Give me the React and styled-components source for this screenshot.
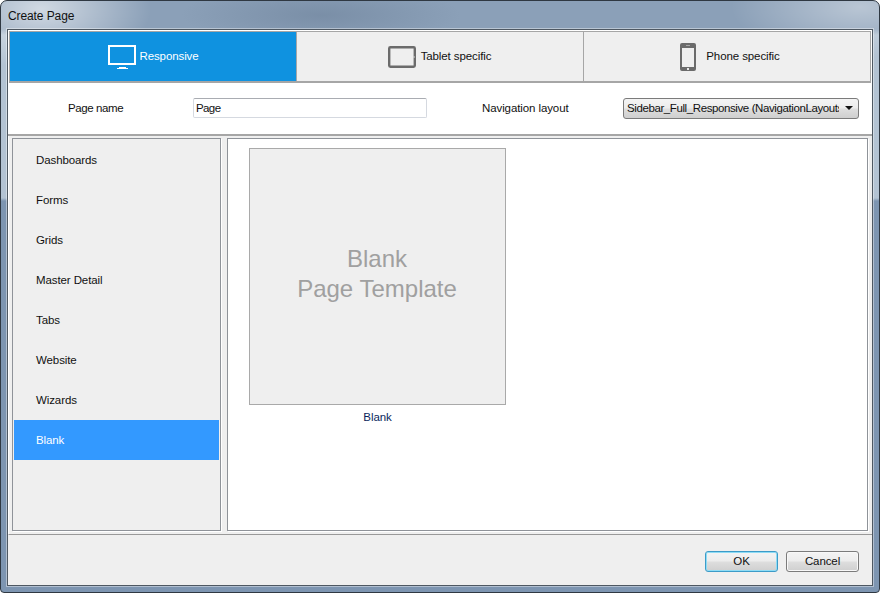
import React from 'react'
import styled, { createGlobalStyle } from 'styled-components'

const Global = createGlobalStyle`
    html, body {
        margin: 0;
        padding: 0;
        background: #fff;
    }
    body {
        font-family: "Liberation Sans", Arial, sans-serif;
        font-size: 11.5px;
        letter-spacing: -.1px;
        color: #111;
    }
`

const Frame = styled.div`
    box-sizing: border-box;
    width: 880px;
    height: 593px;
    display: flex;
    flex-direction: column;
    padding: 0 6px 6px;
    border: 1px solid #2f3842;
    border-radius: 7px 7px 4px 4px;
    background:
        radial-gradient(ellipse 110px 60px at 40px 8px, rgba(255, 255, 255, .6), rgba(255, 255, 255, 0)),
        radial-gradient(ellipse 130px 50px at 860px 6px, rgba(255, 255, 255, .4), rgba(255, 255, 255, 0)),
        radial-gradient(ellipse 140px 30px at 320px 14px, rgba(90, 110, 135, .35), rgba(90, 110, 135, 0)),
        linear-gradient(180deg, #8ba0b8 0, #8ba0b8 28px, #b3c3d3 34px, #b3c3d3 197px, #7d95b1 200px, #7d95b1 100%);
`

const TitleBar = styled.div`
    height: 28px;
    flex: none;
    display: flex;
    align-items: center;
    padding: 1px 0 0 1px;
    box-sizing: border-box;
    color: #111;
    font-size: 12px;
    letter-spacing: -.1px;
`

const Panel = styled.div`
    flex: 1;
    min-height: 0;
    display: flex;
    flex-direction: column;
    background: #fff;
    border: 1px solid #4e5862;
    box-shadow: 0 0 0 1px rgba(255, 255, 255, .4);
`

const TabsWrap = styled.div`
    flex: none;
    padding: 1px 1px 0;
`

const Tabs = styled.div`
    height: 52px;
    box-sizing: border-box;
    display: grid;
    grid-template-columns: 287px 287px 1fr;
    border: 1px solid #a6a6a6;
    border-bottom-width: 2px;
`

const Tab = styled.div`
    display: flex;
    align-items: center;
    justify-content: center;
    gap: 4px;
    box-sizing: border-box;
    background: ${p => (p.$active ? '#0f92e0' : '#efefef')};
    color: ${p => (p.$active ? '#fff' : '#111')};
    border-right: 1px solid #a6a6a6;
    &:last-child {
        border-right: none;
    }
`

const TabLabel = styled.span`
    margin-bottom: 2px;
`

const TabIcon = styled.svg`
    width: 28px;
    height: 28px;
    flex: none;
    display: block;
    overflow: visible;
`

const FormRow = styled.div`
    flex: none;
    height: 53px;
    box-sizing: border-box;
    display: flex;
    align-items: center;
    border-bottom: 2px solid #a6a6a6;
    padding-bottom: 1px;
`

const FieldLabel = styled.label`
    width: ${p => p.$width}px;
    margin-left: ${p => p.$left}px;
    letter-spacing: ${p => p.$spacing || '-.1px'};
    flex: none;
`

const TextInput = styled.div`
    box-sizing: border-box;
    width: 234px;
    height: 20px;
    flex: none;
    display: flex;
    align-items: center;
    padding-left: 2px;
    letter-spacing: -.6px;
    border: 1px solid #d5d9e0;
    border-top-color: #a9acb2;
    border-radius: 2px;
    background: #fff;
`

const Select = styled.div`
    box-sizing: border-box;
    width: 236px;
    height: 21px;
    flex: none;
    display: flex;
    align-items: center;
    padding: 0 5px 0 3px;
    border: 1px solid #7b7b7b;
    border-radius: 3px;
    background: linear-gradient(180deg, #f4f4f4 0, #ececec 48%, #dedede 52%, #cfcfcf 100%);
`

const SelectText = styled.span`
    flex: 1;
    overflow: hidden;
    white-space: nowrap;
    letter-spacing: -.4px;
`

const Caret = styled.span`
    flex: none;
    width: 0;
    height: 0;
    margin-left: 6px;
    border-left: 4px solid transparent;
    border-right: 4px solid transparent;
    border-top: 4px solid #111;
`

const Body = styled.div`
    flex: 1;
    min-height: 0;
    display: flex;
    gap: 6px;
    padding: 2px 4px 3px 3px;
    background: #efefef;
    border-left: 1px solid #fff;
    border-bottom: 1px solid #999;
`

const Sidebar = styled.div`
    width: 209px;
    flex: none;
    box-sizing: border-box;
    padding: 1px;
    border: 1px solid #8f9399;
    background: #efefef;
    box-shadow: 1px 1px 0 #fff;
`

const SideItem = styled.div`
    height: 40px;
    display: flex;
    align-items: center;
    padding-left: 22px;
    background: ${p => (p.$active ? '#3399ff' : 'transparent')};
    color: ${p => (p.$active ? '#fff' : '#111')};
`

const Gallery = styled.div`
    flex: 1;
    box-sizing: border-box;
    padding: 9px 21px;
    background: #fff;
    border: 1px solid #8f9399;
    box-shadow: 1px 1px 0 #fff;
`

const Template = styled.div`
    width: 257px;
    display: flex;
    flex-direction: column;
    align-items: center;
`

const Thumb = styled.div`
    box-sizing: border-box;
    width: 257px;
    height: 257px;
    display: flex;
    flex-direction: column;
    align-items: center;
    justify-content: center;
    border: 1px solid #a9a9a9;
    background: #efefef;
    color: #a0a0a0;
    font-size: 24px;
    letter-spacing: 0;
    line-height: 30px;
    padding: 0 1px 6px 0;
`

const Caption = styled.div`
    margin-top: 6px;
    color: #0a1f5c;
`

const Footer = styled.div`
    flex: none;
    height: 50px;
    box-sizing: border-box;
    display: flex;
    justify-content: flex-end;
    gap: 8px;
    padding: 16px 13px 0 0;
    background: #efefef;
`

const Button = styled.div`
    box-sizing: border-box;
    width: 73px;
    height: 21px;
    display: flex;
    align-items: center;
    justify-content: center;
    padding-bottom: 1px;
    border: 1px solid ${p => (p.$primary ? '#3c9bc8' : '#7b7b7b')};
    border-radius: 3px;
    box-shadow: ${p => (p.$primary ? 'inset 0 0 0 1px #8fdcf5' : 'inset 0 0 0 1px #f8f8f8')};
    background: linear-gradient(180deg, #f4f4f4 0, #ececec 48%, #dedede 52%, #cfcfcf 100%);
`

const MonitorIcon = () => (
    <TabIcon viewBox="0 0 28 28">
        <path fill="#fff" fillRule="evenodd" d="M1 2h28v20H1zM3 4v16h24V4z" />
        <path fill="#fff" d="M12 24h7v1h-7zM10 25h11v1H10z" />
    </TabIcon>
)

const TabletIcon = () => (
    <TabIcon viewBox="0 0 28 28">
        <rect x="0.200" y="4.200" width="25.600" height="19.600" rx="1.200" fill="none" stroke="#6b6b6b" strokeWidth="2.400" />
        <rect x="24.500" y="13" width="1" height="2" fill="#d0d0d0" />
    </TabIcon>
)

const PhoneIcon = () => (
    <TabIcon viewBox="0 0 28 28">
        <path fill="#6b6b6b" fillRule="evenodd" d="M8 0h12q2 0 2 2v24q0 2-2 2H8q-2 0-2-2V2q0-2 2-2zM8 5v19h12V5z" />
        <rect x="12" y="2" width="4" height="1" fill="#a8a8a8" />
        <rect x="13" y="25" width="2" height="2" fill="#e8e8e8" />
    </TabIcon>
)

const categories = ['Dashboards', 'Forms', 'Grids', 'Master Detail', 'Tabs', 'Website', 'Wizards', 'Blank']

const App = () => {
    return (
        <Frame>
            <Global />
            <TitleBar>Create Page</TitleBar>
            <Panel>
                <TabsWrap>
                    <Tabs>
                        <Tab $active><MonitorIcon /><TabLabel>Responsive</TabLabel></Tab>
                        <Tab><TabletIcon /><TabLabel>Tablet specific</TabLabel></Tab>
                        <Tab><PhoneIcon /><TabLabel>Phone specific</TabLabel></Tab>
                    </Tabs>
                </TabsWrap>
                <FormRow>
                    <FieldLabel $left={60} $width={125} $spacing="-.4px">Page name</FieldLabel>
                    <TextInput>Page</TextInput>
                    <FieldLabel $left={55} $width={141}>Navigation layout</FieldLabel>
                    <Select>
                        <SelectText>Sidebar_Full_Responsive (NavigationLayouts</SelectText>
                        <Caret />
                    </Select>
                </FormRow>
                <Body>
                    <Sidebar>
                        {categories.map(name => (
                            <SideItem key={name} $active={name === 'Blank'}>{name}</SideItem>
                        ))}
                    </Sidebar>
                    <Gallery>
                        <Template>
                            <Thumb>
                                <div>Blank</div>
                                <div>Page Template</div>
                            </Thumb>
                            <Caption>Blank</Caption>
                        </Template>
                    </Gallery>
                </Body>
                <Footer>
                    <Button $primary>OK</Button>
                    <Button>Cancel</Button>
                </Footer>
            </Panel>
        </Frame>
    )
}

export default App
